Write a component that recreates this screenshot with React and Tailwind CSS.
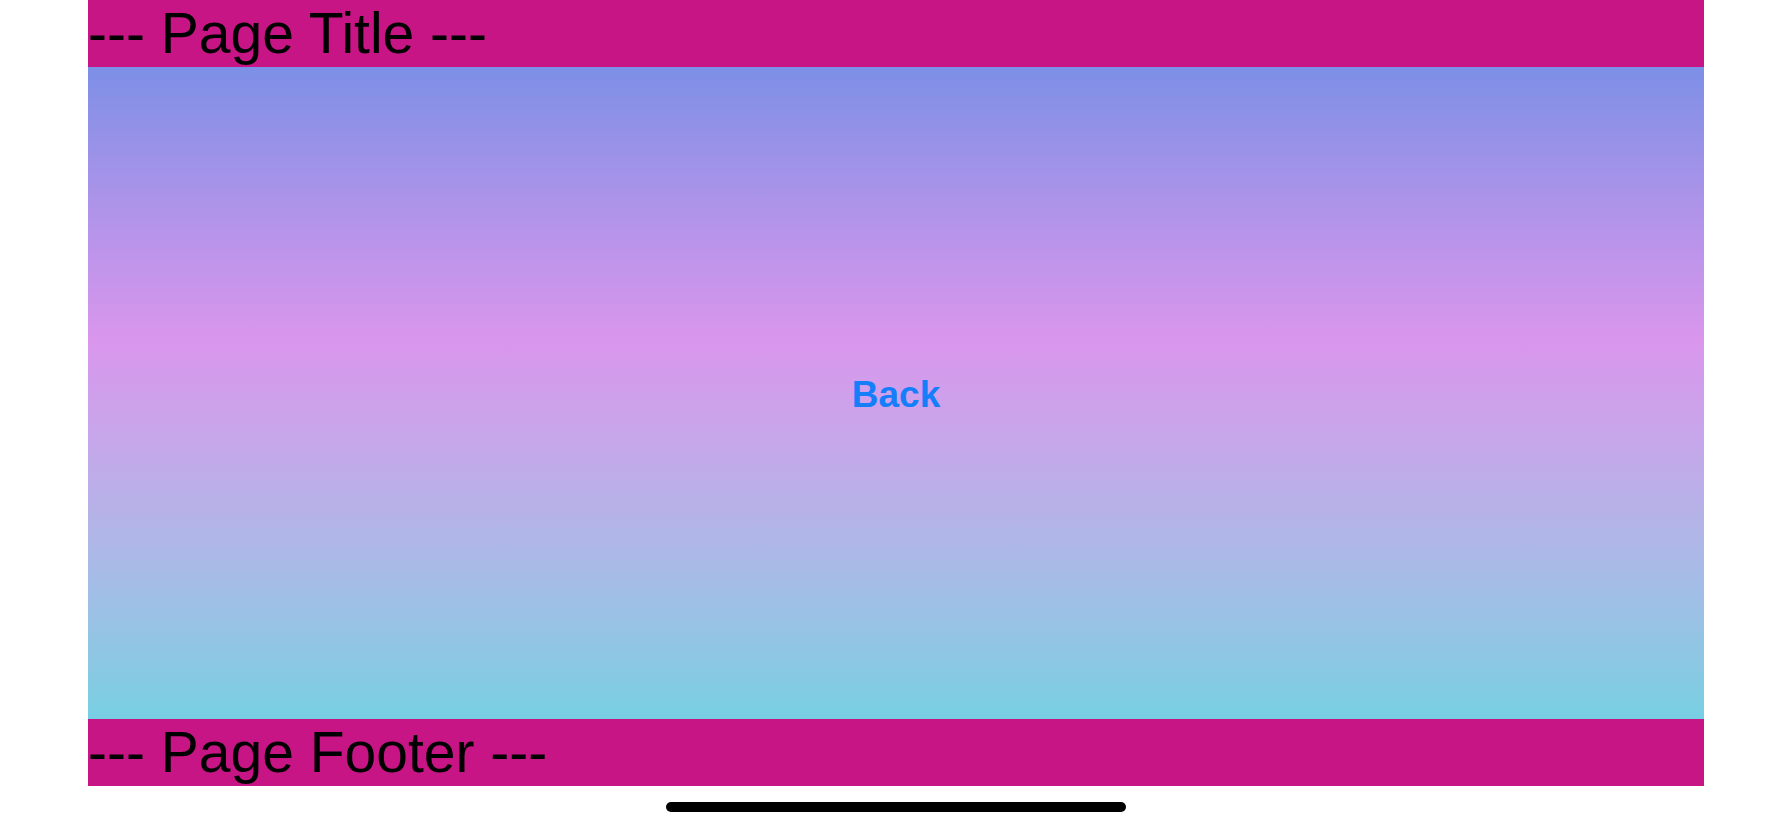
export default function App() {
  return (
    <div
      className="w-full h-[828px] bg-white flex flex-col px-[88px]"
      style={{ fontFamily: "'Liberation Sans', Arial, sans-serif" }}
    >
      {/* title bar */}
      <div className="h-[67px] shrink-0 bg-[#c71585] flex items-center">
        <span className="text-[57px] leading-[67px] text-black whitespace-pre">--- Page Title ---</span>
      </div>

      {/* gradient body */}
      <div className="flex-1 flex items-center justify-center bg-linear-to-b from-[#7c8fe6] via-[#d996ec] via-42% to-[#76cfe2]">
        <button className="text-[37px] leading-[44px] font-semibold text-[#147efb] px-4 pt-[10px] pb-[6px]">Back</button>
      </div>

      {/* footer bar */}
      <div className="h-[67px] shrink-0 bg-[#c71585] flex items-center">
        <span className="text-[57px] leading-[67px] text-black whitespace-pre">--- Page Footer ---</span>
      </div>

      {/* home indicator */}
      <div className="h-[42px] shrink-0 flex items-center justify-center">
        <div className="w-[460px] h-[10px] rounded-full bg-black" />
      </div>
    </div>
  );
}
